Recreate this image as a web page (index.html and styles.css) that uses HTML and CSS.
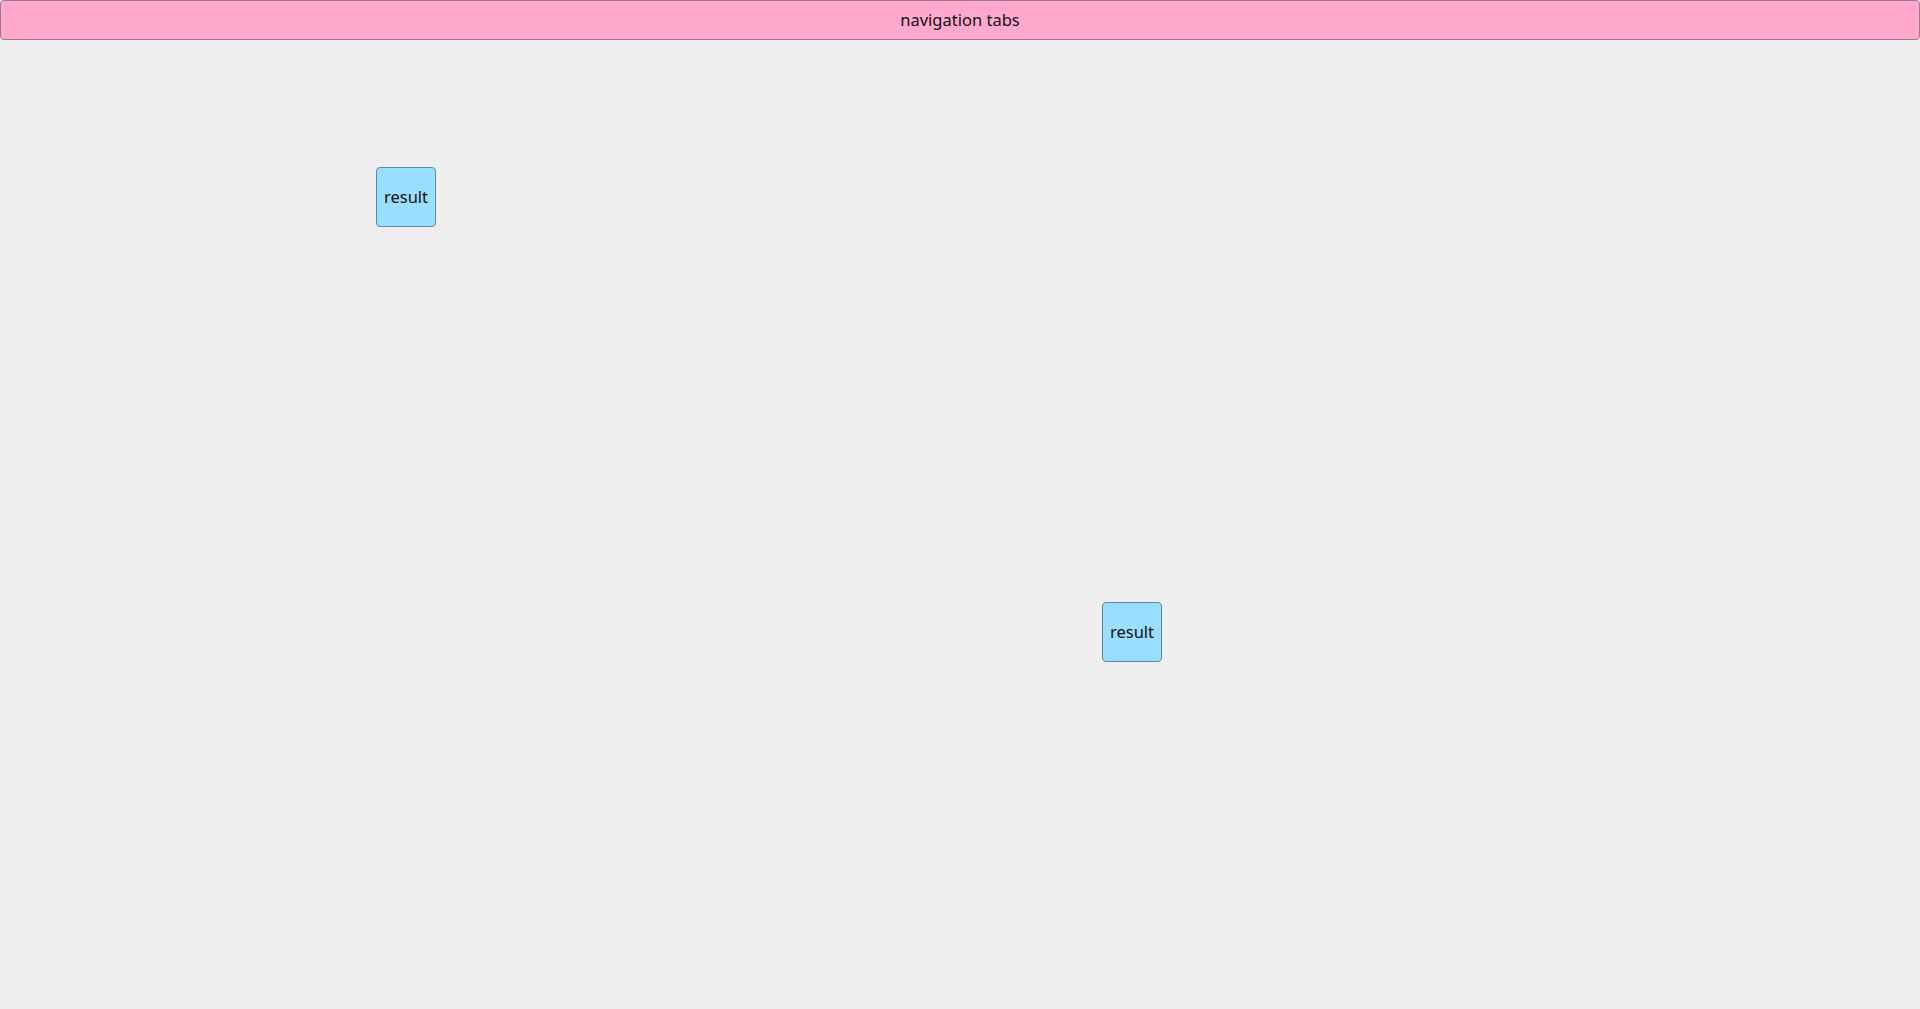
FILE: index.html
```html
<!DOCTYPE html>
<html>
<head>
<meta charset="utf-8">
<link rel="stylesheet" href="styles.css">
</head>
<body>
<div class="nav">navigation tabs</div>
<div class="canvas">
  <div class="result r1">result</div>
  <div class="result r2">result</div>
</div>
</body>
</html>
```
FILE: styles.css
```css
html, body {
  margin: 0;
  padding: 0;
  background: #eeeeee;
  font-family: "Noto Sans", "Open Sans", sans-serif;
  color: #111;
}
body {
  width: 1920px;
  height: 1009px;
  overflow: hidden;
  position: relative;
}
.nav {
  box-sizing: border-box;
  height: 40px;
  padding-bottom: 2px;
  background: #ffaacc;
  border: 1px solid #a07888;
  border-radius: 4px;
  display: flex;
  align-items: center;
  justify-content: center;
  font-size: 16.5px;
}
.canvas {
  position: relative;
  height: 969px;
}
.result {
  position: absolute;
  box-sizing: border-box;
  width: 60px;
  height: 60px;
  padding-bottom: 2px;
  background: #99ddff;
  border: 1px solid #5f8aa4;
  border-radius: 4px;
  display: flex;
  align-items: center;
  justify-content: center;
  font-size: 16.5px;
}
.r1 { left: 376px; top: 127px; }
.r2 { left: 1102px; top: 562px; }
```
